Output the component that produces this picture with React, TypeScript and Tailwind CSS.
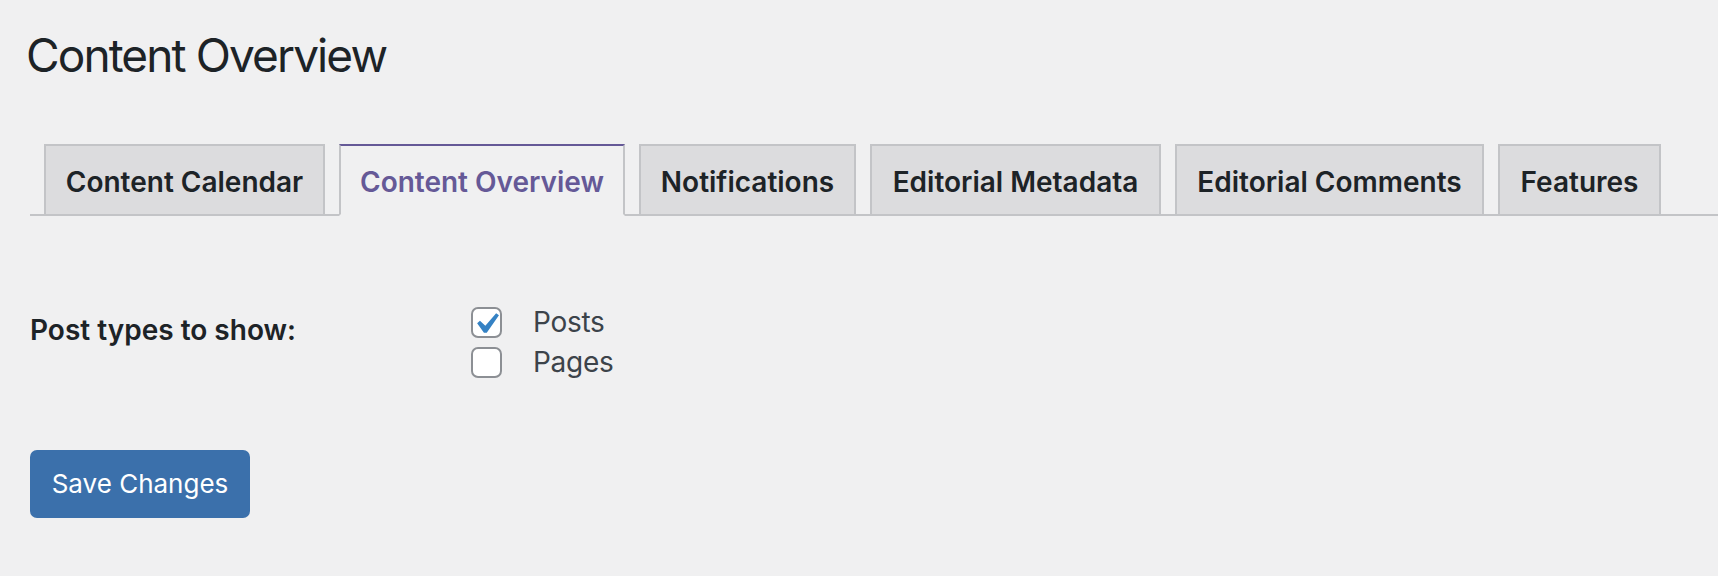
const tabs = [
  { label: "Content Calendar", width: "w-[281px]" },
  { label: "Content Overview", width: "w-[286px]", active: true },
  { label: "Notifications", width: "w-[217px]" },
  { label: "Editorial Metadata", width: "w-[291px]" },
  { label: "Editorial Comments", width: "w-[309px]" },
  { label: "Features", width: "w-[163px]" },
];

const postTypes = [
  { label: "Posts", checked: true },
  { label: "Pages", checked: false },
];

function Checkbox({ checked }: { checked: boolean }) {
  return (
    <span className="relative block h-[31px] w-[31px] shrink-0 rounded-[7px] border-2 border-[#8c8f94] bg-white">
      {checked && (
        <svg
          viewBox="0 0 20 20"
          className="absolute -left-[8px] -top-[6px] h-[42px] w-[42px]"
        >
          <path
            fill="#3582c4"
            d="M14.83 4.89l1.34.94-5.81 8.38H9.02L5.78 9.67l1.34-1.25 2.57 2.4z"
          />
        </svg>
      )}
    </span>
  );
}

export default function App() {
  return (
    <div className="min-h-screen bg-[#f0f0f1] font-['Inter',sans-serif] text-[#1d2327]">
      <div className="px-[26px] pt-[25px]">
        <h1 className="text-[46px] font-normal leading-[60px] tracking-[-1.9px]">Content Overview</h1>
      </div>

      <div className="pl-[30px]">
        <nav className="mt-[59px] flex items-end gap-[14px] border-b-2 border-[#c3c4c7] pl-[14px]">
          {tabs.map((tab) =>
            tab.active ? (
              <a
                key={tab.label}
                className={`${tab.width} -mb-[2px] h-[72px] border-2 border-[#c3c4c7] border-t-[#655997] border-b-[#f0f0f1] bg-[#f0f0f1] pt-[12px] text-center text-[28px] font-semibold leading-[48px] text-[#655997]`}
              >
                {tab.label}
              </a>
            ) : (
              <a
                key={tab.label}
                className={`${tab.width} h-[70px] border-2 border-b-0 border-[#c3c4c7] bg-[#dcdcde] pt-[12px] text-center text-[28px] font-semibold leading-[48px] text-[#1d2327]`}
              >
                {tab.label}
              </a>
            )
          )}
        </nav>

        <div className="mt-[86px] flex items-start">
          <div className="mt-[8px] w-[441px] text-[28px] font-semibold leading-[40px]">
            Post types to show:
          </div>
          <div className="flex flex-col">
            {postTypes.map((type) => (
              <label key={type.label} className="flex h-[40px] items-center gap-[31px]">
                <Checkbox checked={type.checked} />
                <span className="text-[28px] leading-[40px] tracking-[-0.3px] text-[#3c434a]">{type.label}</span>
              </label>
            ))}
          </div>
        </div>

        <button className="mt-[68px] h-[68px] w-[220px] rounded-[7px] bg-[#3b70ab] text-[26px] leading-[68px] text-white">
          Save Changes
        </button>
      </div>
    </div>
  );
}
